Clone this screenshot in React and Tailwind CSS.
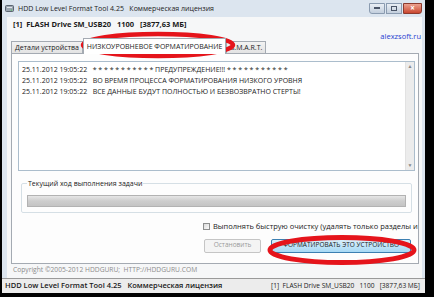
import React from 'react';

const logLines = [
  '* * * * * * * * * * * ПРЕДУПРЕЖДЕНИЕ!!! * * * * * * * * * * *',
  'ВО ВРЕМЯ ПРОЦЕССА ФОРМАТИРОВАНИЯ НИЗКОГО УРОВНЯ',
  'ВСЕ ДАННЫЕ БУДУТ ПОЛНОСТЬЮ И БЕЗВОЗВРАТНО СТЕРТЫ!',
];

const TitleButtons = () => (
  <div className="flex items-start gap-[1px] h-[12px]">
    <div className="w-[16px] h-[11px] rounded-bl-[3px] border border-[#8a9bb0] bg-gradient-to-b from-[#e9eef5] to-[#c3cfdd] flex items-center justify-center">
      <div className="w-[6px] h-[2px] bg-[#4a5568]" />
    </div>
    <div className="w-[16px] h-[11px] border border-[#8a9bb0] bg-gradient-to-b from-[#e9eef5] to-[#c3cfdd] flex items-center justify-center">
      <div className="w-[6px] h-[5px] border border-[#4a5568]" />
    </div>
    <div className="w-[19px] h-[11px] rounded-br-[3px] border border-[#8b3a2e] bg-gradient-to-b from-[#eba08f] to-[#c9452e] flex items-center justify-center text-white text-[8px] font-bold leading-none">
      ×
    </div>
  </div>
);

export default function App() {
  return (
    <div className="w-[434px] h-[297px] bg-black overflow-hidden relative font-['Open_Sans','Noto_Sans',sans-serif] text-[#1a1a1a]">
      <div className="ml-[2px] w-[423px] h-[293px] bg-[#dce5ef] flex flex-col">
        {/* title bar */}
        <div className="h-[17px] flex items-center pl-[3px] pr-[3px] shrink-0">
          <svg width="9" height="9" viewBox="0 0 9 9" className="mr-[4px]">
            <rect x="0.5" y="1.5" width="8" height="6" rx="1" fill="#9aa5b1" stroke="#5b6571" />
            <rect x="2" y="3" width="5" height="1" fill="#e2e6ea" />
            <circle cx="6.5" cy="6" r="0.6" fill="#3bd13b" />
          </svg>
          <span className="text-[7px] leading-none whitespace-pre text-[#222]">HDD Low Level Format Tool 4.25   Коммерческая лицензия</span>
          <div className="ml-auto">
            <TitleButtons />
          </div>
        </div>

        {/* client */}
        <div className="flex-1 ml-[5px] mr-[3px] bg-[#f6f7f8] flex flex-col relative">
          <div className="h-[14px] flex items-center pl-[6px] pt-[1px]">
            <span className="text-[7.5px] font-bold leading-none whitespace-pre">[1]  FLASH Drive SM_USB20   1100   [3877,63 МБ]</span>
          </div>
          <div className="h-[22px] flex items-end pl-[4px] relative">
            <span className="absolute right-[1px] top-[2px] text-[7.5px] leading-none text-[#1f3fd1]">alexzsoft.ru</span>
            <div className="h-[12px] px-[3px] flex items-center border border-b-0 border-[#a4aab2] bg-gradient-to-b from-[#f2f2f2] to-[#e3e3e3] text-[7px] leading-none">
              Детали устройства
            </div>
            <div className="h-[16px] -mb-[1px] px-[3px] flex items-center border border-b-0 border-[#a4aab2] bg-white text-[7px] leading-none relative z-10">
              НИЗКОУРОВНЕВОЕ ФОРМАТИРОВАНИЕ
            </div>
            <div className="h-[12px] px-[3px] flex items-center border border-b-0 border-[#a4aab2] bg-gradient-to-b from-[#f2f2f2] to-[#e3e3e3] text-[7px] leading-none">
              S.M.A.R.T.
            </div>
          </div>

          {/* tab panel */}
          <div className="ml-[4px] mr-[3px] h-[211px] border border-[#a4aab2] bg-[#fdfdfd] flex flex-col overflow-hidden">
            <div className="mt-[7px] ml-[6px] mr-[3px] h-[110px] border border-[#abbdcc] bg-white flex">
              <div className="flex-1 pl-[3px] pt-[2px] flex flex-col">
                {logLines.map((line, i) => (
                  <div key={i} className="h-[11px] flex items-center text-[7px] leading-none whitespace-pre">
                    <span>25.11.2012 19:05:22   </span>
                    <span>{line}</span>
                  </div>
                ))}
              </div>
              <div className="w-[9px] bg-[#ececec] border-l border-[#e2e2e2] flex flex-col justify-between items-center py-[2px] text-[5px] leading-none text-[#888]">
                <span>▲</span>
                <span>▼</span>
              </div>
            </div>

            <fieldset className="mt-[9px] ml-[9px] mr-[6px] border border-[#d5dfe5] rounded-[2px] px-[5px] pb-[5px]">
              <legend className="text-[7px] leading-none px-[1px] text-[#1a1a1a]">Текущий ход выполнения задачи</legend>
              <div className="mt-[8px] h-[12px] border border-[#b2b2b2] bg-gradient-to-b from-[#e6e6e6] via-[#cdcdcd] to-[#c4c4c4]" />
            </fieldset>

            <div className="mt-[10px] ml-[191px] flex items-center whitespace-nowrap">
              <div className="w-[7px] h-[7px] border border-[#8e8f8f] bg-gradient-to-br from-[#dcdcdc] to-[#fafafa] mr-[3px] shrink-0" />
              <span className="text-[7.5px] leading-none">Выполнять быструю очистку (удалять только разделы и MBR)</span>
            </div>

            <div className="mt-[8px] ml-[192px] flex items-center gap-[10px]">
              <div className="w-[57px] h-[14px] border border-[#c5c5c5] rounded-[2px] bg-[#f4f4f4] flex items-center justify-center text-[6.5px] leading-none text-[#9a9a9a]">
                Остановить
              </div>
              <div className="w-[140px] h-[14px] border border-[#3c7fb1] rounded-[2px] bg-gradient-to-b from-[#d9f0fc] to-[#a7d9f5] flex items-center justify-center text-[6.5px] leading-none whitespace-nowrap">
                ФОРМАТИРОВАТЬ ЭТО УСТРОЙСТВО
              </div>
            </div>
          </div>

          <div className="h-[13px] flex items-center pl-[6px]">
            <span className="text-[6.7px] leading-none text-[#8c8c8c] whitespace-pre">Copyright ©2005-2012 HDDGURU;  HTTP://HDDGURU.COM</span>
          </div>

          <div className="mt-auto h-[15px] border-t border-[#9a9a9a] bg-[#ececec] -ml-[5px] -mr-[3px] flex items-center justify-between pl-[3px] pr-[5px] whitespace-pre leading-none">
            <span className="text-[7.5px] font-semibold">HDD Low Level Format Tool 4.25   Коммерческая лицензия</span>
            <span className="text-[6.6px]">[1]  FLASH Drive SM_USB20   1100   [3877,63 МБ]</span>
          </div>
        </div>
      </div>

      {/* red hand-drawn marks */}
      <svg className="absolute inset-0 pointer-events-none" width="434" height="297" viewBox="0 0 434 297">
        <ellipse cx="158" cy="45" rx="75" ry="11" fill="none" stroke="#e5141b" strokeWidth="4.5" />
        <ellipse cx="342" cy="250" rx="72" ry="12.5" fill="none" stroke="#e5141b" strokeWidth="5" />
      </svg>
    </div>
  );
}
